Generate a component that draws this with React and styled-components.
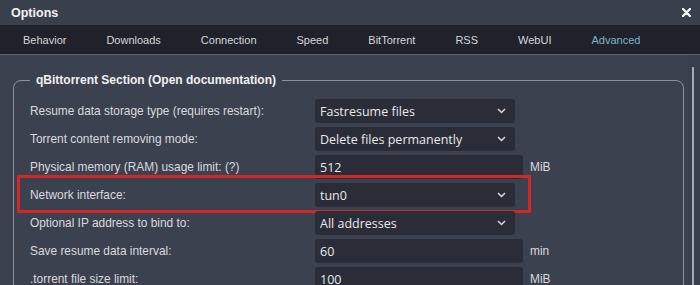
import React from "react";
import styled, { createGlobalStyle } from "styled-components";

const Global = createGlobalStyle`
  html, body { margin: 0; padding: 0; background: #3c4150; }
  body { font-family: "Liberation Sans", Arial, sans-serif; overflow: hidden; }
`;

const Window = styled.div`
  width: 700px;
  height: 285px;
  display: flex;
  flex-direction: column;
  background: #3c4150;
  overflow: hidden;
`;

const TitleBar = styled.div`
  height: 25px;
  flex: none;
  display: flex;
  align-items: center;
  justify-content: space-between;
  padding: 0 9px 0 11px;
  background: #3a3f4c;
`;

const Title = styled.span`
  color: #f2f2f2;
  font-weight: bold;
  font-size: 12.5px;
`;

const CloseBtn = styled.span`
  display: flex;
  align-items: center;
`;

const TabBar = styled.div`
  height: 29px;
  flex: none;
  display: flex;
  align-items: center;
  padding-left: 3px;
  background: #1f222a;
  border-bottom: 1px solid #5d626e;
`;

const Tab = styled.span`
  padding: 0 20px;
  font-size: 11px;
  color: ${(p) => (p.$active ? "#7fb0cc" : "#d4d6da")};
`;

const Body = styled.div`
  flex: 1;
  display: flex;
  min-height: 0;
`;

const Scroller = styled.div`
  flex: 1;
  min-width: 0;
  padding: 18px 4px 0 13px;
`;

const ScrollTrack = styled.div`
  width: 12px;
  flex: none;
  display: flex;
  justify-content: center;
  padding-top: 12px;
  background: #3a3f4d;
`;

const Thumb = styled.div`
  width: 2px;
  height: 100%;
  background: #a3a8b2;
  margin-left: -2px;
`;

const Fieldset = styled.fieldset`
  margin: 0;
  padding: 11px 0 0 16px;
  border: 1px solid #8b909b;
  border-radius: 8px;
  min-width: 0;
`;

const Legend = styled.legend`
  padding: 0 6px;
  color: #f0f0f0;
  font-weight: bold;
  font-size: 12px;
  line-height: 15px;
`;

const Rows = styled.div`
  display: flex;
  flex-direction: column;
  gap: 4px;
`;

const Row = styled.div`
  position: relative;
  display: grid;
  grid-template-columns: 285px max-content max-content;
  align-items: center;
  height: 24px;
`;

const Label = styled.span`
  color: #d9dadd;
  font-size: 11.9px;
`;

const Field = styled.div`
  box-sizing: border-box;
  width: ${(p) => p.$w}px;
  height: 24px;
  display: flex;
  align-items: center;
  justify-content: space-between;
  padding: 0 9px 0 5px;
  background: #2a2d37;
  border-radius: 3px;
  color: #e8e9ec;
  font-family: "Open Sans", "Noto Sans", sans-serif;
  font-size: 12.5px;
`;

const Unit = styled.span`
  margin-left: 7px;
  color: #d9dadd;
  font-size: 11.9px;
`;

const Highlight = styled.div`
  position: absolute;
  left: -13px;
  top: -8px;
  width: 514px;
  height: 38px;
  box-sizing: border-box;
  border: 3px solid #d32626;
  pointer-events: none;
`;

const Chevron = () => (
  <svg width="9" height="6" viewBox="0 0 9 6">
    <polyline points="1,1 4.5,4.5 8,1" fill="none" stroke="#d8d9dc" strokeWidth="1.5" />
  </svg>
);

const tabs = ["Behavior", "Downloads", "Connection", "Speed", "BitTorrent", "RSS", "WebUI", "Advanced"];

const rows = [
  { label: "Resume data storage type (requires restart):", value: "Fastresume files", select: true },
  { label: "Torrent content removing mode:", value: "Delete files permanently", select: true },
  { label: "Physical memory (RAM) usage limit: (?)", value: "512", unit: "MiB" },
  { label: "Network interface:", value: "tun0", select: true, mark: true },
  { label: "Optional IP address to bind to:", value: "All addresses", select: true },
  { label: "Save resume data interval:", value: "60", unit: "min" },
  { label: ".torrent file size limit:", value: "100", unit: "MiB" },
];

export default function App() {
  return (
    <Window>
      <Global />
      <TitleBar>
        <Title>Options</Title>
        <CloseBtn>
          <svg width="9" height="9" viewBox="0 0 9 9">
            <path d="M1 1 L8 8 M8 1 L1 8" stroke="#f4f4f4" strokeWidth="2.4" strokeLinecap="round" />
          </svg>
        </CloseBtn>
      </TitleBar>
      <TabBar>
        {tabs.map((t) => (
          <Tab key={t} $active={t === "Advanced"}>{t}</Tab>
        ))}
      </TabBar>
      <Body>
        <Scroller>
          <Fieldset>
            <Legend>qBittorrent Section (Open documentation)</Legend>
            <Rows>
              {rows.map((r) => (
                <Row key={r.label}>
                  <Label>{r.label}</Label>
                  <Field $w={r.select ? 200 : 208}>
                    <span>{r.value}</span>
                    {r.select && <Chevron />}
                  </Field>
                  {r.unit && <Unit>{r.unit}</Unit>}
                  {r.mark && <Highlight />}
                </Row>
              ))}
            </Rows>
          </Fieldset>
        </Scroller>
        <ScrollTrack>
          <Thumb />
        </ScrollTrack>
      </Body>
    </Window>
  );
}
